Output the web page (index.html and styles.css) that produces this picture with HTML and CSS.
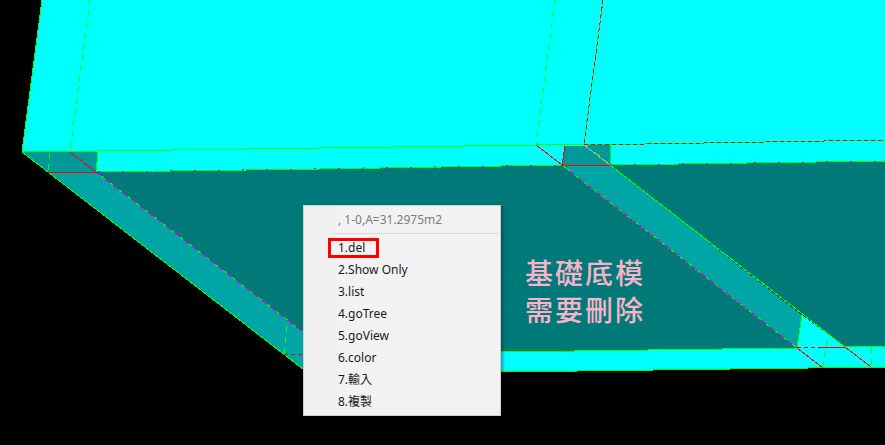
FILE: index.html
```html
<!DOCTYPE html>
<html lang="en">
<head>
    <meta charset="UTF-8">
    <meta name="viewport" content="width=device-width, initial-scale=1.0">
    <title>Model View</title>
    <link rel="stylesheet" href="styles.css">
</head>
<body>

<div class="viewport">
    <svg class="model" width="885" height="445" viewBox="0 0 885 445">
        <!-- faces -->
        <polygon class="wall" points="42,0 885,0 885,161 610,165 97,172 22,152"/>
        <polygon class="floor" points="97,172 320,169 562,165 610,165 885,161 885,347 845,347 610,165 562,165 797,348 500,352 303,354"/>
        <polygon class="wall" points="303,354 500,352 797,348 802,315 845,347 885,347 885,367 500,372 320,373"/>
        <polygon class="band" points="22,152 98,152 96,172 303,332 320,345 320,383"/>
        <polygon class="band" points="562,165 610,165 802,315 797,348"/>
        <polygon class="pocket" points="22,152 98,152 96,172 48,172"/>
        <polygon class="pocket" points="565,146 611,145 610,165 562,165"/>

        <!-- edges -->
        <g class="edges">
            <polyline class="green" points="42,0 22,152 303,369"/>
            <polyline class="green" points="22,152 98,151 320,148 536,145 611,144"/>
            <polyline class="green" points="584,145 885,140"/>
            <polyline class="green" points="603,0 584,144"/>
            <polyline class="green" points="98,172 320,169 562,165"/>
            <polyline class="green" points="610,165 885,161"/>
            <polyline class="green" points="610,165 845,347 885,346"/>
            <polyline class="green" points="303,354 500,352 797,348"/>
            <polyline class="green" points="500,372 885,367"/>
            <polyline class="green" points="802,315 797,348"/>
            <polyline class="green" points="98,152 96,172"/>
            <polyline class="green" points="611,145 610,165"/>
            <polyline class="green" points="96,172 303,332"/>
            <polyline class="green" points="562,165 797,348"/>

            <polyline class="magenta dash-mid" points="96,172 303,332"/>
            <polyline class="magenta dash-mid" points="570,171 797,348"/>
            <polyline class="magenta dash-long" points="98,172 562,165"/>
            <polyline class="magenta dash-long" points="610,165 885,161"/>

            <polyline class="green dash" points="90,0 70,152"/>
            <polyline class="green dash" points="50,153 48,172"/>
            <polyline class="green dash" points="555,0 536,145"/>
            <polyline class="green dash" points="287,326 284,355"/>
            <polyline class="green dash" points="827,340 823,367"/>
            <polyline class="green dash" points="872,348 871,367"/>
            <polyline class="green dash" points="595,152 610,165"/>

            <polyline class="red" points="48,172 96,172"/>
            <polyline class="red" points="70,152 96,172"/>
            <polyline class="red" points="536,145 562,165"/>
            <polyline class="red" points="562,165 565,146"/>
            <polyline class="red" points="562,165 610,165"/>
            <polyline class="red" points="797,348 823,368"/>
            <polyline class="red" points="845,347 871,367"/>
            <polyline class="red" points="820,347 845,347"/>
            <polyline class="red dash-short" points="797,348 820,347"/>
            <polyline class="red dash-short" points="284,355 303,354"/>
            <polyline class="red dash-short" points="603,0 584,144"/>
            <polyline class="red dash-short" points="584,145 885,140"/>
            <polyline class="grey" points="584,145 610,165"/>
        </g>
    </svg>

    <div class="note">
        <div>基礎底模</div>
        <div>需要刪除</div>
    </div>

    <div class="menu">
        <div class="menu-title">, 1-0,A=31.2975m2</div>
        <ul class="menu-list">
            <li class="menu-item">1.del<span class="menu-mark"></span></li>
            <li class="menu-item">2.Show Only</li>
            <li class="menu-item">3.list</li>
            <li class="menu-item">4.goTree</li>
            <li class="menu-item">5.goView</li>
            <li class="menu-item">6.color</li>
            <li class="menu-item">7.輸入</li>
            <li class="menu-item">8.複製</li>
        </ul>
    </div>
</div>

</body>
</html>
```

FILE: styles.css
```css
body {
    margin: 0;
    background-color: #000;
    font-family: "Noto Sans", "Noto Sans CJK TC", sans-serif;
    overflow: hidden;
}

.viewport {
    position: relative;
    width: 885px;
    height: 445px;
    overflow: hidden;
}

.model {
    display: block;
    shape-rendering: crispEdges;
}

.wall {
    fill: #00ffff;
}

.floor {
    fill: #007979;
}

.band {
    fill: #00a5a5;
}

.pocket {
    fill: #009999;
}

.edges polyline {
    fill: none;
    stroke-width: 1;
}

.green {
    stroke: #00ff00;
}

.red {
    stroke: #ff0000;
}

.magenta {
    stroke: #e000e0;
}

.grey {
    stroke: #b0b0b0;
}

.dash {
    stroke-dasharray: 6 5;
}

.dash-short {
    stroke-dasharray: 4 3;
}

.dash-mid {
    stroke-dasharray: 7 4;
}

.dash-long {
    stroke-dasharray: 2 22;
}

.note {
    position: absolute;
    left: 525px;
    top: 254px;
    color: #f9b2c9;
    font-family: "Noto Sans CJK TC", sans-serif;
    font-size: 28px;
    font-weight: 500;
    line-height: 37px;
    letter-spacing: 2px;
}

.menu {
    position: absolute;
    left: 303px;
    top: 205px;
    width: 198px;
    height: 211px;
    box-sizing: border-box;
    border: 1px solid #cfcfcf;
    background: linear-gradient(90deg, #f0f0f0 30px, #f2f2f2 30px);
    box-shadow: 2px 2px 3px rgba(0, 0, 0, 0.35);
    font-size: 12px;
    color: #1a1a1a;
}

.menu-title {
    height: 27px;
    line-height: 27px;
    margin-left: 30px;
    padding-left: 4px;
    margin-right: 2px;
    border-bottom: 1px solid #d8d8d8;
    color: #7d7d7d;
}

.menu-list {
    list-style: none;
    margin: 3px 0 0;
    padding: 0;
}

.menu-item {
    position: relative;
    height: 22px;
    line-height: 22px;
    padding-left: 34px;
}

.menu-mark {
    position: absolute;
    left: 24px;
    top: 1px;
    width: 51px;
    height: 20px;
    box-sizing: border-box;
    border: 3px solid #ff0000;
}
```
